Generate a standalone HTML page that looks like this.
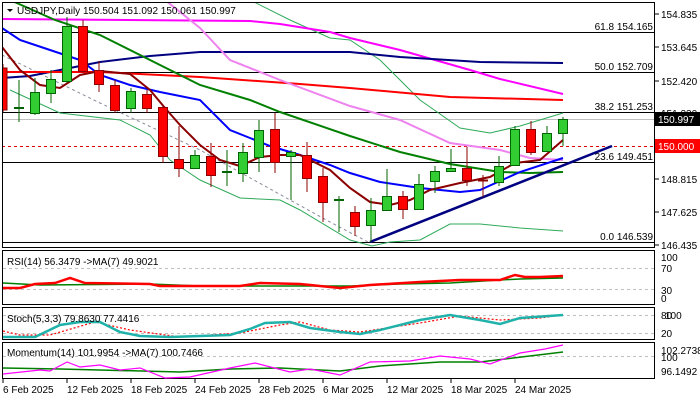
<!DOCTYPE html>
<html><head><meta charset="utf-8"><style>
html,body{margin:0;padding:0;background:#fff;}
svg{display:block;font-family:"Liberation Sans",sans-serif;}
</style></head><body>
<svg width="700" height="400" viewBox="0 0 700 400" xmlns="http://www.w3.org/2000/svg">
<rect width="700" height="400" fill="#fff"/>
<g stroke="#000" stroke-width="1">
<line x1="2" y1="32.5" x2="654" y2="32.5"/>
<line x1="2" y1="72.5" x2="654" y2="72.5"/>
<line x1="2" y1="112.5" x2="654" y2="112.5"/>
<line x1="2" y1="162.5" x2="654" y2="162.5"/>
<line x1="2" y1="242.5" x2="654" y2="242.5"/>
</g>
<line x1="2" y1="119.5" x2="654" y2="119.5" stroke="#c0c0c0"/>
<line x1="2" y1="146.5" x2="654" y2="146.5" stroke="#e00000" stroke-dasharray="3,3"/>
<polyline fill="none" stroke="#8a8a9a" stroke-dasharray="3,3" points="2,55 100,103 200,150 290,200 330,222 370,243"/>
<polyline fill="none" stroke="#2eaa5a" stroke-width="1" points="250,0 290,20 330,38 350,40 380,60 420,100 460,128 490,133 520,126 563,113"/>
<polyline fill="none" stroke="#2eaa5a" stroke-width="1" points="10,90 60,113 120,120 150,135 170,160 200,180 240,198 280,200 300,210 350,240 372,246 390,242 420,240 450,224 480,224 520,228 563,231"/>
<polyline fill="none" stroke="#ff00ff" stroke-width="2" points="2,19 250,21 280,24 330,32 350,38 400,50 470,70 500,79 563,94"/>
<polyline fill="none" stroke="#000080" stroke-width="2" points="2,78 30,76 60,70 100,62 150,56 200,52 350,52 400,57 480,62 563,63"/>
<polyline fill="none" stroke="#ff0000" stroke-width="2" points="2,72 100,72 200,77 300,84 350,88 450,97 563,100"/>
<polyline fill="none" stroke="#ee82ee" stroke-width="2" points="165,0 200,28 230,60 280,80 350,106 400,120 450,143 500,150 530,158 563,160"/>
<polyline fill="none" stroke="#008000" stroke-width="2" points="10,0 55,20 100,35 150,60 200,85 250,100 280,112 350,136 400,152 450,164 500,172 530,173 563,172"/>
<polyline fill="none" stroke="#0000ff" stroke-width="2" points="2,28 20,40 50,50 80,60 100,75 130,85 160,92 200,100 230,130 250,138 270,146 300,155 330,165 350,173 380,182 420,188 460,192 480,190 520,172 563,158"/>
<polyline fill="none" stroke="#8b0000" stroke-width="2" points="2,47 20,70 40,85 60,88 80,75 100,71 130,74 150,90 165,108 180,125 200,145 220,160 240,166 260,157 280,155 300,155 330,170 350,188 370,202 390,205 410,200 430,190 460,183 490,177 515,163 540,160 563,140"/>
<line x1="370" y1="242" x2="612" y2="146" stroke="#000080" stroke-width="2.5"/>
<g stroke-width="1">
<g stroke="#8b0000" fill="#ff0000"><line x1="3" y1="64" x2="3" y2="112"/><rect x="-1" y="68" width="8" height="42"/></g>
<g stroke="#006400" fill="#32cd32"><line x1="19" y1="80" x2="19" y2="122"/><line x1="14" y1="108" x2="24" y2="108" stroke-width="2"/></g>
<g stroke="#006400" fill="#32cd32"><line x1="35" y1="78" x2="35" y2="115"/><rect x="30.5" y="92.5" width="9" height="21"/></g>
<g stroke="#006400" fill="#32cd32"><line x1="51" y1="70" x2="51" y2="103"/><rect x="46.5" y="79.5" width="9" height="14"/></g>
<g stroke="#006400" fill="#32cd32"><line x1="67" y1="17" x2="67" y2="83"/><rect x="62.5" y="26.5" width="9" height="55"/></g>
<g stroke="#8b0000" fill="#ff0000"><line x1="83" y1="20" x2="83" y2="73"/><rect x="78.5" y="26.5" width="9" height="45"/></g>
<g stroke="#8b0000" fill="#ff0000"><line x1="99" y1="61" x2="99" y2="92"/><rect x="94.5" y="70.5" width="9" height="14"/></g>
<g stroke="#8b0000" fill="#ff0000"><line x1="115" y1="80" x2="115" y2="113"/><rect x="110.5" y="85.5" width="9" height="25"/></g>
<g stroke="#006400" fill="#32cd32"><line x1="131" y1="88" x2="131" y2="113"/><rect x="126.5" y="91.5" width="9" height="17"/></g>
<g stroke="#8b0000" fill="#ff0000"><line x1="147" y1="90" x2="147" y2="113"/><rect x="142.5" y="94.5" width="9" height="14"/></g>
<g stroke="#8b0000" fill="#ff0000"><line x1="163" y1="105" x2="163" y2="163"/><rect x="158.5" y="107.5" width="9" height="49"/></g>
<g stroke="#8b0000" fill="#ff0000"><line x1="179" y1="126" x2="179" y2="177"/><rect x="174.5" y="159.5" width="9" height="9"/></g>
<g stroke="#006400" fill="#32cd32"><line x1="195" y1="150" x2="195" y2="169"/><rect x="190.5" y="155.5" width="9" height="13"/></g>
<g stroke="#8b0000" fill="#ff0000"><line x1="211" y1="143" x2="211" y2="187"/><rect x="206.5" y="156.5" width="9" height="19"/></g>
<g stroke="#006400"><line x1="227" y1="150" x2="227" y2="186"/><line x1="222" y1="172" x2="232" y2="172" stroke-width="2"/></g>
<g stroke="#006400" fill="#32cd32"><line x1="243" y1="143" x2="243" y2="182"/><rect x="238.5" y="152.5" width="9" height="21"/></g>
<g stroke="#006400" fill="#32cd32"><line x1="259" y1="120" x2="259" y2="172"/><rect x="254.5" y="130.5" width="9" height="27"/></g>
<g stroke="#8b0000" fill="#ff0000"><line x1="275" y1="113" x2="275" y2="173"/><rect x="270.5" y="129.5" width="9" height="33"/></g>
<g stroke="#006400" fill="#32cd32"><line x1="291" y1="150" x2="291" y2="200"/><rect x="286.5" y="152.5" width="9" height="4"/></g>
<g stroke="#8b0000" fill="#ff0000"><line x1="307" y1="142" x2="307" y2="192"/><rect x="302.5" y="155.5" width="9" height="23"/></g>
<g stroke="#8b0000" fill="#ff0000"><line x1="323" y1="168" x2="323" y2="222"/><rect x="318.5" y="176.5" width="9" height="26"/></g>
<g stroke="#006400"><line x1="339" y1="196" x2="339" y2="232"/><line x1="334" y1="200" x2="344" y2="200" stroke-width="2"/></g>
<g stroke="#8b0000" fill="#ff0000"><line x1="355" y1="206" x2="355" y2="236"/><rect x="350.5" y="212.5" width="9" height="14"/></g>
<g stroke="#006400" fill="#32cd32"><line x1="371" y1="198" x2="371" y2="242"/><rect x="366.5" y="210.5" width="9" height="15"/></g>
<g stroke="#006400" fill="#32cd32"><line x1="387" y1="169" x2="387" y2="210"/><rect x="382.5" y="196.5" width="9" height="14"/></g>
<g stroke="#8b0000" fill="#ff0000"><line x1="403" y1="191" x2="403" y2="219"/><rect x="398.5" y="196.5" width="9" height="13"/></g>
<g stroke="#006400" fill="#32cd32"><line x1="419" y1="174" x2="419" y2="209"/><rect x="414.5" y="184.5" width="9" height="25"/></g>
<g stroke="#006400" fill="#32cd32"><line x1="435" y1="166" x2="435" y2="193"/><rect x="430.5" y="171.5" width="9" height="10"/></g>
<g stroke="#006400" fill="#32cd32"><line x1="451" y1="149" x2="451" y2="172"/><rect x="446.5" y="168.5" width="9" height="3"/></g>
<g stroke="#8b0000" fill="#ff0000"><line x1="467" y1="147" x2="467" y2="186"/><rect x="462.5" y="168.5" width="9" height="12"/></g>
<g stroke="#8b0000"><line x1="483" y1="175" x2="483" y2="197"/><line x1="478" y1="180.5" x2="488" y2="180.5" stroke-width="2"/></g>
<g stroke="#006400" fill="#32cd32"><line x1="499" y1="156" x2="499" y2="186"/><rect x="494.5" y="166.5" width="9" height="16"/></g>
<g stroke="#006400" fill="#32cd32"><line x1="515" y1="126" x2="515" y2="166"/><rect x="510.5" y="129.5" width="9" height="36"/></g>
<g stroke="#8b0000" fill="#ff0000"><line x1="531" y1="121" x2="531" y2="155"/><rect x="526.5" y="129.5" width="9" height="23"/></g>
<g stroke="#006400" fill="#32cd32"><line x1="547" y1="126" x2="547" y2="152"/><rect x="542.5" y="133.5" width="9" height="18"/></g>
<g stroke="#006400" fill="#32cd32"><line x1="563" y1="117" x2="563" y2="146"/><rect x="558.5" y="119.5" width="9" height="14"/></g>
</g>
<rect x="0" y="0" width="2" height="400" fill="#fff"/>
<rect x="655" y="0" width="45" height="400" fill="#fff"/>
<rect x="0" y="0" width="700" height="2" fill="#fff"/>
<rect x="0" y="248" width="700" height="152" fill="#fff"/>
<g font-size="10" fill="#000" text-anchor="end">
<text x="653" y="30">61.8 154.165</text>
<text x="653" y="70">50.0 152.709</text>
<text x="653" y="110">38.2 151.253</text>
<text x="653" y="160">23.6 149.451</text>
<text x="653" y="240">0.0 146.539</text>
</g>
<polygon points="7,9 13,9 10,12" fill="#000"/>
<text x="17" y="14" font-size="10" fill="#000">USDJPY,Daily  150.504 151.092 150.061 150.997</text>
<g fill="none" stroke="#000" stroke-width="1">
<rect x="2.5" y="2.5" width="652" height="245"/>
<rect x="2.5" y="250.5" width="652" height="54"/>
<rect x="2.5" y="307.5" width="652" height="32"/>
<rect x="2.5" y="342.5" width="652" height="36"/>
</g>
<g stroke="#000"><line x1="655" y1="14" x2="659" y2="14"/><line x1="655" y1="47" x2="659" y2="47"/><line x1="655" y1="81" x2="659" y2="81"/><line x1="655" y1="179" x2="659" y2="179"/><line x1="655" y1="212" x2="659" y2="212"/><line x1="655" y1="245" x2="659" y2="245"/></g>
<g font-size="10" fill="#000">
<text x="661" y="18">154.835</text>
<text x="661" y="51">153.645</text>
<text x="661" y="85">152.420</text>
<text x="661" y="117">151.230</text>
<text x="661" y="183">148.815</text>
<text x="661" y="216">147.625</text>
<text x="661" y="249">146.435</text>
</g>
<rect x="655" y="112" width="45" height="14" fill="#000"/>
<text x="658" y="123" font-size="10" fill="#fff">150.997</text>
<rect x="655" y="139" width="45" height="14" fill="#ff0000"/>
<text x="658" y="150" font-size="10" fill="#fff">150.000</text>
<g stroke="#c0c0c0" stroke-dasharray="3,3"><line x1="3" y1="268.5" x2="654" y2="268.5"/><line x1="3" y1="289.5" x2="654" y2="289.5"/>
<line x1="3" y1="315.5" x2="654" y2="315.5"/><line x1="3" y1="333.5" x2="654" y2="333.5"/><line x1="3" y1="356.5" x2="654" y2="356.5"/></g>
<polyline fill="none" stroke="#008000" stroke-width="1.5" points="3,283 40,285 150,284 200,286 300,286 350,286 400,284 450,283 500,280 520,279 563,278"/>
<polyline fill="none" stroke="#ff0000" stroke-width="2.5" points="3,288 20,288 35,284 55,283 70,278 85,283 150,284 160,286 240,286 260,283 300,284 340,288 370,285 420,282 460,280 500,280 515,275 525,277 540,277 563,276"/>
<text x="7" y="265" font-size="10">RSI(14) 56.3479  -&gt;MA(7) 49.9021</text>
<g font-size="10"><text x="661" y="261">100</text><text x="661" y="272">70</text><text x="661" y="294">30</text><text x="661" y="302">0</text></g>
<polyline fill="none" stroke="#ff0000" stroke-width="1.2" stroke-dasharray="2,2" points="3,331 20,335 50,335 95,322 130,330 180,337 240,333 280,325 300,322 330,330 360,332 420,323 460,316 500,320 540,318 563,315"/>
<polyline fill="none" stroke="#20b2aa" stroke-width="2.5" points="3,337 35,337 60,325 80,322 100,322 120,332 140,336 170,337 230,335 250,329 265,323 290,322 310,328 340,332 360,334 380,330 420,320 450,315 480,320 500,324 520,318 563,315"/>
<text x="7" y="322" font-size="10">Stoch(5,3,3) 79.8630 77.4416</text>
<g font-size="10"><text x="661" y="319">80</text><text x="665" y="319">100</text><text x="661" y="337">20</text></g>
<polyline fill="none" stroke="#008000" stroke-width="1.5" points="3,368 60,369 180,372 230,369 280,368 340,371 380,366 440,362 480,362 563,352"/>
<polyline fill="none" stroke="#ff00ff" stroke-width="1.2" points="3,374 40,370 50,371 67,362 80,367 100,365 120,370 140,368 165,378 190,377 230,368 255,363 290,372 310,369 340,375 370,362 410,361 440,356 470,359 490,364 520,353 545,349 563,345"/>
<text x="7" y="356" font-size="10">Momentum(14) 101.9954  -&gt;MA(7) 100.7466</text>
<g font-size="10"><text x="661" y="354">102.2738</text><text x="661" y="361">100</text><text x="661" y="375">96.1492</text></g>
<g stroke="#000"><line x1="3" y1="379" x2="3" y2="383"/><line x1="67" y1="379" x2="67" y2="383"/><line x1="131" y1="379" x2="131" y2="383"/><line x1="195" y1="379" x2="195" y2="383"/><line x1="259" y1="379" x2="259" y2="383"/><line x1="323" y1="379" x2="323" y2="383"/><line x1="387" y1="379" x2="387" y2="383"/><line x1="451" y1="379" x2="451" y2="383"/><line x1="515" y1="379" x2="515" y2="383"/></g>
<g font-size="10">
<text x="3" y="393">6 Feb 2025</text>
<text x="67" y="393">12 Feb 2025</text>
<text x="131" y="393">18 Feb 2025</text>
<text x="195" y="393">24 Feb 2025</text>
<text x="259" y="393">28 Feb 2025</text>
<text x="323" y="393">6 Mar 2025</text>
<text x="387" y="393">12 Mar 2025</text>
<text x="451" y="393">18 Mar 2025</text>
<text x="515" y="393">24 Mar 2025</text>
</g>
</svg>
</body></html>
